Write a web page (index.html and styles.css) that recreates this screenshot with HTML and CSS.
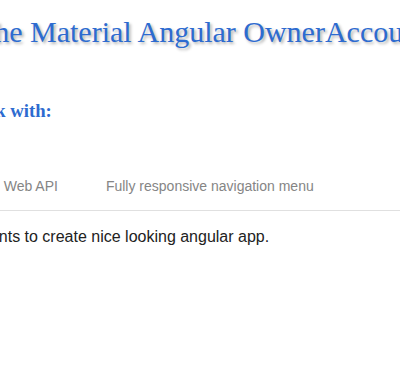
FILE: index.html
```html
<!DOCTYPE html>
<html lang="en">
<head>
    <meta charset="UTF-8">
    <meta name="viewport" content="width=device-width, initial-scale=1.0">
    <title>OwnerAccount</title>
    <link rel="stylesheet" href="styles.css">
</head>
<body>
    <div class="page">
        <h1 class="welcome">Welcome to the Material Angular OwnerAccount app</h1>
        <h3 class="subtitle">This project is built to work with:</h3>

        <div class="tab-group">
            <div class="tab-header">
                <div class="tab-label active">Angular Material</div>
                <div class="tab-label">.NET Core Web API</div>
                <div class="tab-label">Fully responsive navigation menu</div>
            </div>
            <div class="tab-body">
                <p>Use Angular Material components to create nice looking angular app.</p>
            </div>
        </div>
    </div>
</body>
</html>
```

FILE: styles.css
```css
body {
    margin: 0;
    font-family: "Liberation Sans", Arial, sans-serif;
    background-color: #fff;
    overflow: hidden;
}

.page {
    margin-left: -240px;
    width: 1200px;
    white-space: nowrap;
}

.welcome {
    font-family: "Liberation Serif", "Times New Roman", serif;
    font-size: 30px;
    font-weight: normal;
    line-height: 34px;
    color: #2d6bd0;
    text-shadow: 2px 2px 3px rgba(0,0,0,0.3);
    margin: 15px 0 0 75px;
}

.subtitle {
    font-family: "Liberation Serif", "Times New Roman", serif;
    font-size: 18.72px;
    font-weight: bold;
    line-height: 22px;
    color: #2d6bd0;
    margin: 51px 0 0 23px;
}

.tab-group {
    margin-top: 40px;
}

.tab-header {
    display: flex;
    height: 48px;
    border-bottom: 1px solid #e0e0e0;
}

.tab-label {
    display: flex;
    align-items: center;
    padding: 0 24px;
    font-size: 14px;
    color: #858585;
}

.tab-label.active {
    color: #333;
}

.tab-body {
    padding: 17px 0 0 20px;
}

.tab-body p {
    margin: 0;
    font-size: 16px;
    color: #222;
}
```
